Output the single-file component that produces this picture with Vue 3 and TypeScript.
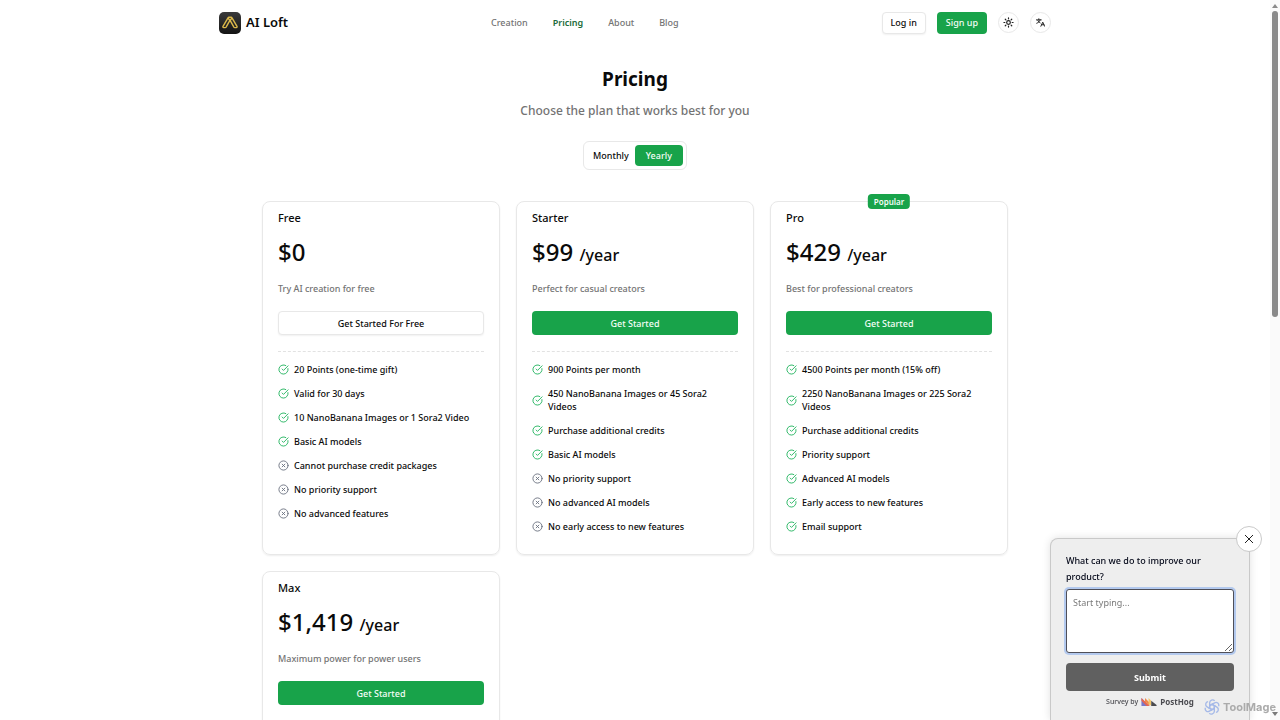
<script setup lang="ts">
import { ref } from 'vue'

interface Feature {
  text: string
  included: boolean
}

interface Plan {
  name: string
  price: string
  period?: string
  description: string
  action: string
  outline?: boolean
  popular?: boolean
  features: Feature[]
}

const yes = (text: string): Feature => ({ text, included: true })
const no = (text: string): Feature => ({ text, included: false })

const links = ['Creation', 'Pricing', 'About', 'Blog']
const periods = ['Monthly', 'Yearly']
const period = ref('Yearly')
const answer = ref('')

const plans: Plan[] = [
  {
    name: 'Free',
    price: '$0',
    description: 'Try AI creation for free',
    action: 'Get Started For Free',
    outline: true,
    features: [
      yes('20 Points (one-time gift)'),
      yes('Valid for 30 days'),
      yes('10 NanoBanana Images or 1 Sora2 Video'),
      yes('Basic AI models'),
      no('Cannot purchase credit packages'),
      no('No priority support'),
      no('No advanced features'),
    ],
  },
  {
    name: 'Starter',
    price: '$99',
    period: '/year',
    description: 'Perfect for casual creators',
    action: 'Get Started',
    features: [
      yes('900 Points per month'),
      yes('450 NanoBanana Images or 45 Sora2 Videos'),
      yes('Purchase additional credits'),
      yes('Basic AI models'),
      no('No priority support'),
      no('No advanced AI models'),
      no('No early access to new features'),
    ],
  },
  {
    name: 'Pro',
    price: '$429',
    period: '/year',
    description: 'Best for professional creators',
    action: 'Get Started',
    popular: true,
    features: [
      yes('4500 Points per month (15% off)'),
      yes('2250 NanoBanana Images or 225 Sora2 Videos'),
      yes('Purchase additional credits'),
      yes('Priority support'),
      yes('Advanced AI models'),
      yes('Early access to new features'),
      yes('Email support'),
    ],
  },
  {
    name: 'Max',
    price: '$1,419',
    period: '/year',
    description: 'Maximum power for power users',
    action: 'Get Started',
    features: [],
  },
]
</script>

<template>
  <div class="page">
    <header class="nav">
      <a class="brand" href="#">
        <svg class="logo" viewBox="0 0 22 22" aria-hidden="true">
          <defs>
            <linearGradient id="tile" x1="0" y1="0" x2="0" y2="1">
              <stop offset="0" stop-color="#3a3a3a" />
              <stop offset="1" stop-color="#141414" />
            </linearGradient>
          </defs>
          <rect width="22" height="22" rx="5" fill="url(#tile)" />
          <path
            d="M9.8 5.3h2.4c.4 0 .6.2.8.5l5 8.6c.3.6 0 1.2-.7 1.2h-1.5c-.4 0-.7-.2-.9-.5L11 8.2l-3.9 6.9c-.2.3-.5.5-.9.5H4.700c-.7 0-1-.6-.7-1.200l5-8.600c.2-.3.4-.5.8-.5zM9.300 6.400l2.800 3.600M12.700 6.400L9.900 10"
            fill="none"
            stroke="#dcb94a"
            stroke-width="1.4"
            stroke-linejoin="round"
          />
        </svg>
        <span>AI Loft</span>
      </a>
      <nav class="links">
        <a v-for="link in links" :key="link" href="#" :class="{ active: link === 'Pricing' }">{{ link }}</a>
      </nav>
      <div class="actions">
        <button class="btn outline" type="button">Log in</button>
        <button class="btn primary" type="button">Sign up</button>
        <button class="round" type="button" aria-label="Theme">
          <svg viewBox="0 0 24 24" class="icon">
            <circle cx="12" cy="12" r="4" />
            <path d="M12 2v2M12 20v2M4.900 4.900l1.400 1.400M17.700 17.700l1.400 1.400M2 12h2M20 12h2M6.300 17.700l-1.400 1.400M19.100 4.900l-1.400 1.400" />
          </svg>
        </button>
        <button class="round" type="button" aria-label="Language">
          <svg viewBox="0 0 24 24" class="icon small">
            <path d="M1 5h13M7.500 2v3M11 5C10 9 7 12 2 14M5 7c1.500 3 4 5 6 6M13 22l5-11 5 11M15 18h6" />
          </svg>
        </button>
      </div>
    </header>

    <main class="main">
      <h1>Pricing</h1>
      <p class="lead">Choose the plan that works best for you</p>
      <div class="toggle">
        <button
          v-for="p in periods"
          :key="p"
          type="button"
          :class="{ on: p === period }"
          :aria-pressed="p === period"
          @click="period = p"
        >
          {{ p }}
        </button>
      </div>

      <div class="grid">
        <section v-for="plan in plans" :key="plan.name" class="card">
          <span v-if="plan.popular" class="badge">Popular</span>
          <h2>{{ plan.name }}</h2>
          <p class="price">
            {{ plan.price }} <span v-if="plan.period" class="per">{{ plan.period }}</span>
          </p>
          <p class="desc">{{ plan.description }}</p>
          <button type="button" class="btn wide" :class="plan.outline ? 'outline' : 'primary'">{{ plan.action }}</button>
          <hr />
          <ul>
            <li v-for="f in plan.features" :key="f.text">
              <svg v-if="f.included" class="mark good" viewBox="0 0 24 24" aria-hidden="true">
                <path d="M21.800 10A10 10 0 1 1 17 3.300M9 11l3 3L22 4" />
              </svg>
              <svg v-else class="mark bad" viewBox="0 0 24 24" aria-hidden="true">
                <circle cx="12" cy="12" r="10" />
                <path d="M15 9l-6 6M9 9l6 6" />
              </svg>
              <span>{{ f.text }}</span>
            </li>
          </ul>
        </section>
      </div>
    </main>

    <form class="survey" @submit.prevent>
      <button class="close" type="button" aria-label="Close survey">
        <svg viewBox="0 0 12 12"><path d="M2 2l8 8M10 2l-8 8" /></svg>
      </button>
      <label for="answer">What can we do to improve our product?</label>
      <textarea id="answer" v-model="answer" placeholder="Start typing..."></textarea>
      <button class="submit" type="submit">Submit</button>
      <a class="credit" href="#">
        <span>Survey by</span>
        <svg viewBox="0 0 17 9" aria-hidden="true">
          <path d="M0 0l9 9H0z" fill="#7a78c8" />
          <path d="M0 0l9 9H6L0 3z" fill="#e8664d" />
          <path d="M4 0l5 5v4L4 4z" fill="#f08a4b" />
          <path d="M8 0l3 3v6L8 6z" fill="#f4c66a" />
          <path d="M11 3l6 5v1h-6z" fill="#4b4b50" />
        </svg>
        <strong>PostHog</strong>
      </a>
    </form>

    <div class="watermark">
      <svg viewBox="0 0 24 24" aria-hidden="true">
        <g fill="none" stroke="#a5b9e8" stroke-width="2">
          <path
            v-for="n in 6"
            :key="n"
            :transform="`rotate(${n * 60} 12 12)`"
            d="M8.500 10V5.500a4.200 4.200 0 0 1 7.500-2.600M8.500 10l3.500-2 5.500 3.100"
          />
        </g>
      </svg>
      <span>ToolMage</span>
    </div>

    <div class="scroll" aria-hidden="true">
      <i class="arrow up"></i>
      <i class="thumb"></i>
      <i class="arrow down"></i>
    </div>
  </div>
</template>

<style>
body {
  margin: 0;
  background: #fff;
}
</style>

<style scoped>
.page {
  position: relative;
  box-sizing: border-box;
  height: 100vh;
  overflow: hidden;
  padding-right: 10px;
  font: 500 9px/13px 'Noto Sans', sans-serif;
  color: #0a0a0a;
}
.page * {
  box-sizing: border-box;
}
button,
textarea {
  font: inherit;
  color: inherit;
}
button {
  cursor: pointer;
}
a {
  color: inherit;
  text-decoration: none;
}
h1,
h2,
p,
ul {
  margin: 0;
  padding: 0;
}
.nav {
  display: flex;
  justify-content: space-between;
  align-items: center;
  max-width: 832px;
  height: 45px;
  margin: 0 auto;
}
.brand {
  display: flex;
  align-items: center;
  gap: 5px;
  font-size: 13px;
  font-weight: 600;
}
.logo {
  width: 22px;
  height: 22px;
}
.links {
  display: flex;
  gap: 25px;
  color: #737373;
}
.links .active {
  color: #1b6b3a;
  font-weight: 600;
}
.actions {
  display: flex;
  justify-content: flex-end;
  align-items: center;
  gap: 11px;
}
.btn {
  height: 22px;
  padding: 0 8px;
  border: 1px solid transparent;
  border-radius: 4px;
}
.outline {
  background: #fff;
  border-color: #e8e8e8;
  box-shadow: 0 1px 2px rgba(0, 0, 0, 0.06);
}
.primary {
  background: #18a34a;
  color: #f4fdf7;
}
.round {
  display: grid;
  place-items: center;
  width: 21px;
  height: 21px;
  padding: 0;
  border: 1px solid #e8e8e8;
  border-radius: 50%;
  background: #fff;
}
.icon {
  width: 11px;
  height: 11px;
  fill: none;
  stroke: #222;
  stroke-width: 2.6;
  stroke-linecap: round;
}
.icon.small {
  width: 9px;
  height: 9px;
}
.main {
  display: flex;
  flex-direction: column;
  align-items: center;
  padding-top: 20px;
}
h1 {
  font-size: 19px;
  line-height: 28px;
  font-weight: 700;
}
.lead {
  margin-top: 8px;
  font-size: 12px;
  line-height: 20px;
  color: #737373;
}
.toggle {
  display: flex;
  margin-top: 20px;
  padding: 3px;
  border: 1px solid #e8e8e8;
  border-radius: 6px;
}
.toggle button {
  height: 21px;
  padding: 0 6px;
  border: 0;
  border-radius: 4px;
  background: none;
}
.toggle .on {
  padding: 0 11px;
  background: #18a34a;
  color: #f4fdf7;
}
.grid {
  display: grid;
  grid-template-columns: repeat(3, 1fr);
  gap: 16px;
  width: 100%;
  max-width: 746px;
  margin-top: 31px;
}
.card {
  position: relative;
  display: flex;
  flex-direction: column;
  padding: 8px 15px 21px;
  border: 1px solid #e8e8e8;
  border-radius: 8px;
  box-shadow: 0 1px 2px rgba(0, 0, 0, 0.07);
}
.badge {
  position: absolute;
  top: -8px;
  left: 50%;
  transform: translateX(-50%);
  padding: 0 6px;
  border-radius: 4px;
  background: #18a34a;
  color: #f4fdf7;
  font-size: 8px;
  line-height: 15px;
  font-weight: 600;
}
h2 {
  font-size: 11px;
  line-height: 16px;
  font-weight: 500;
}
.price {
  margin-top: 10px;
  font-size: 24px;
  line-height: 32px;
}
.per {
  font-size: 16px;
  line-height: 16px;
}
.desc {
  margin-top: 14px;
  line-height: 14px;
  color: #737373;
}
.wide {
  height: 24px;
  margin-top: 15px;
}
hr {
  width: 100%;
  margin: 16px 0 11px;
  border: 0;
  border-top: 1px dashed #e2e2e2;
}
ul {
  display: flex;
  flex-direction: column;
  gap: 11px;
  padding-right: 8px;
  list-style: none;
}
li {
  display: flex;
  align-items: center;
  gap: 5px;
}
.mark {
  flex: none;
  width: 11px;
  height: 11px;
  fill: none;
  stroke-width: 2;
  stroke-linecap: round;
  stroke-linejoin: round;
}
.good {
  stroke: #22b35e;
}
.bad {
  stroke: #6b7280;
}
.survey {
  position: fixed;
  right: 30px;
  bottom: 0;
  display: flex;
  flex-direction: column;
  width: 200px;
  height: 182px;
  padding: 14px 15px 0;
  border: 1px solid #c9c9c9;
  border-bottom: 0;
  border-radius: 8px 8px 0 0;
  background: #eeeeee;
  box-shadow: 0 0 8px rgba(0, 0, 0, 0.12);
  color: #020617;
}
.survey label {
  padding-right: 16px;
  line-height: 16px;
}
.close {
  position: absolute;
  top: -13px;
  right: -13px;
  display: grid;
  place-items: center;
  width: 26px;
  height: 26px;
  padding: 0;
  border: 1px solid #c9c9c9;
  border-radius: 50%;
  background: #fff;
}
.close svg {
  width: 12px;
  height: 12px;
  fill: none;
  stroke: #222;
  stroke-width: 1;
}
.survey textarea {
  height: 64px;
  margin-top: 4px;
  padding: 6px;
  border: 1px solid #4f4f58;
  border-radius: 3px;
  outline: 0;
  background: #fff;
  box-shadow: 0 0 0 2px #b3c9ee;
  line-height: 14px;
  font-weight: 400;
}
.survey textarea::placeholder {
  color: #7a7a7a;
}
.submit {
  height: 28px;
  margin-top: 10px;
  border: 0;
  border-radius: 4px;
  background: #606060;
  color: #fff;
  font-weight: 700;
}
.credit {
  display: flex;
  justify-content: center;
  align-items: center;
  gap: 3px;
  margin-top: 4px;
  font-size: 7px;
  color: #4b4b50;
}
.credit svg {
  width: 16px;
  height: 8px;
}
.credit strong {
  font-size: 8px;
  font-weight: 700;
}
.watermark {
  position: fixed;
  z-index: 2;
  right: 4px;
  bottom: 4px;
  display: flex;
  align-items: center;
  gap: 3px;
  font: 700 11px/18px 'Inter', sans-serif;
  color: #ababab;
}
.watermark svg {
  width: 16px;
  height: 16px;
}
.scroll {
  position: fixed;
  top: 0;
  right: 0;
  bottom: 0;
  display: flex;
  flex-direction: column;
  align-items: center;
  width: 10px;
  padding: 4px 0;
  background: rgba(245, 245, 245, 0.5);
}
.arrow {
  border: 3px solid transparent;
}
.up {
  border-top: 0;
  border-bottom: 4px solid #8a8a8a;
}
.down {
  margin-top: auto;
  border-bottom: 0;
  border-top: 4px solid #7a7a7a;
}
.thumb {
  width: 6px;
  height: 43%;
  margin-top: 3px;
  border-radius: 3px;
  background: #8a8a8a;
}
</style>
